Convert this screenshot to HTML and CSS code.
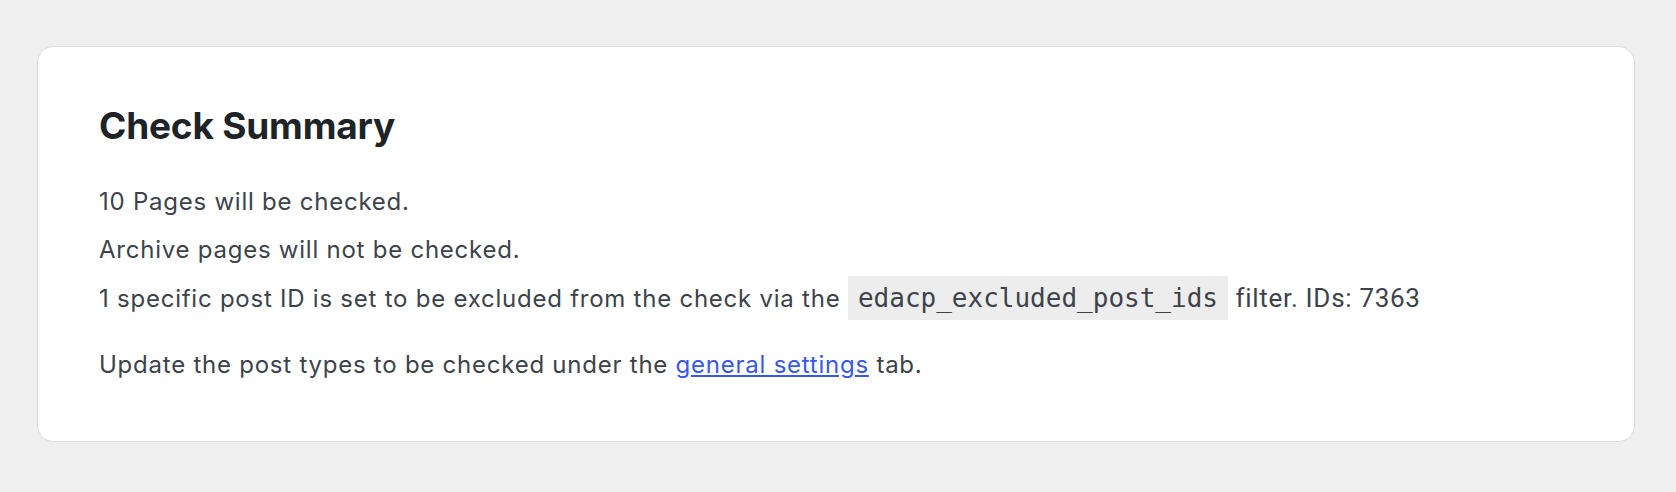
FILE: index.html
```html
<!DOCTYPE html>
<html lang="en">
<head>
<meta charset="utf-8">
<title>Check Summary</title>
<link rel="stylesheet" href="styles.css">
</head>
<body>
<main class="page">
  <section class="card">
    <h2 class="card-title">Check Summary</h2>
    <div class="summary-list">
      <p class="summary-line">10 Pages will be checked.</p>
      <p class="summary-line">Archive pages will not be checked.</p>
      <p class="summary-line">1 specific post ID is set to be excluded from the check via the <code class="code-chip">edacp_excluded_post_ids</code> <span class="alt-font">filter. IDs: 7363</span></p>
    </div>
    <p class="summary-note">Update the post types to be checked under the <a class="link" href="#">general settings</a> tab.</p>
  </section>
</main>
</body>
</html>
```

FILE: styles.css
```css
html, body {
  margin: 0;
  padding: 0;
  background: #f0f0f1;
}

body {
  font-family: Inter, "Noto Sans", sans-serif;
  color: #3c434a;
}

.page {
  padding: 46px 41px 0 37px;
}

.card {
  background: #ffffff;
  border: 1px solid #dcdcde;
  border-radius: 16px;
  padding: 56px 60px 58px 61px;
}

.card-title {
  margin: 0 0 35px;
  font-size: 37px;
  line-height: 46px;
  font-weight: 700;
  color: #1d2327;
  letter-spacing: -0.2px;
}

.summary-list {
  display: flex;
  flex-direction: column;
  gap: 12px;
}

.summary-line,
.summary-note {
  margin: 0;
  font-size: 24px;
  line-height: 36px;
  letter-spacing: 0.76px;
}

.summary-note {
  margin-top: 30px;
}

.code-chip {
  font-family: "DejaVu Sans Mono", "Liberation Mono", monospace;
  font-size: 26px;
  letter-spacing: 0;
  background: rgba(0, 0, 0, 0.07);
  color: #3c434a;
  padding: 7px 10px;
}

.alt-font {
  font-family: Roboto, sans-serif;
  font-size: 26px;
  letter-spacing: 0.7px;
}

.link {
  color: #3858e9;
  text-decoration: underline;
}
```
